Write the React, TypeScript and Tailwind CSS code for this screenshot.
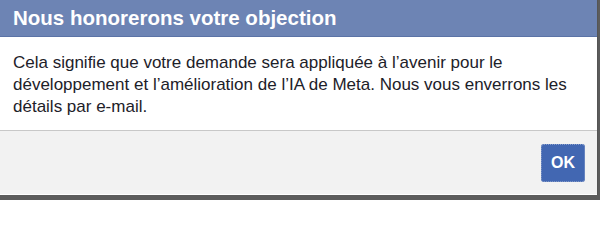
export default function App() {
  return (
    <div className="h-[200px] w-[600px] overflow-hidden bg-[#5c5c5c] font-['Liberation_Sans',Arial,sans-serif]">
      <div className="flex w-[598px] flex-col border-r border-[#555555] bg-white">
        {/* Title bar */}
        <div className="flex h-[37px] items-center border-b border-[#5b73a6] bg-[#6d84b4] px-[13px]">
          <h2 className="text-[20.5px] font-bold leading-none text-white">Nous honorerons votre objection</h2>
        </div>

        {/* Message */}
        <div className="h-[94px] border-b border-[#c8c8c8] px-[13px] pt-[15px]">
          <p className="w-[578px] text-[17px] leading-[22px] text-[#1d2129]">
            Cela signifie que votre demande sera appliquée à l’avenir pour le développement et l’amélioration de
            l’IA de Meta. Nous vous enverrons les détails par e-mail.
          </p>
        </div>

        {/* Footer */}
        <div className="flex h-[63px] items-center justify-end bg-[#f2f2f2] pr-[12px]">
          <button className="flex h-[38px] w-[44px] items-center justify-center rounded-[3px] bg-[#4267b2] text-[16px] font-bold text-white outline-1 outline-offset-[-1px] outline-dotted outline-[#8aa0cc]">
            OK
          </button>
        </div>
        <div className="h-px bg-white" />
      </div>
    </div>
  )
}
